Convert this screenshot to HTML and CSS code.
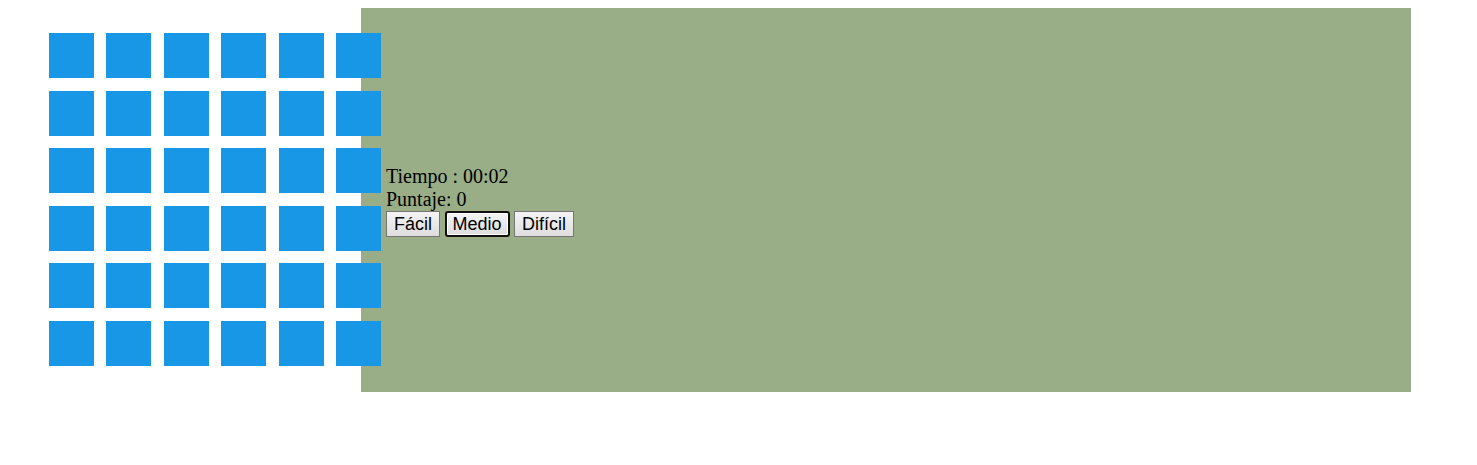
FILE: index.html
```html
<!DOCTYPE html>
<html lang="es">
<head>
<meta charset="utf-8">
<title>Juego</title>
<link rel="stylesheet" href="styles.css">
</head>
<body>
<div class="page">
  <div class="board">
    <div class="grid">
      <div class="cell"></div><div class="cell"></div><div class="cell"></div><div class="cell"></div><div class="cell"></div><div class="cell"></div>
      <div class="cell"></div><div class="cell"></div><div class="cell"></div><div class="cell"></div><div class="cell"></div><div class="cell"></div>
      <div class="cell"></div><div class="cell"></div><div class="cell"></div><div class="cell"></div><div class="cell"></div><div class="cell"></div>
      <div class="cell"></div><div class="cell"></div><div class="cell"></div><div class="cell"></div><div class="cell"></div><div class="cell"></div>
      <div class="cell"></div><div class="cell"></div><div class="cell"></div><div class="cell"></div><div class="cell"></div><div class="cell"></div>
      <div class="cell"></div><div class="cell"></div><div class="cell"></div><div class="cell"></div><div class="cell"></div><div class="cell"></div>
    </div>
  </div>
  <div class="panel">
    <div class="info">
      <div class="line">Tiempo : 00:02</div>
      <div class="line">Puntaje: 0</div>
      <div class="buttons">
        <button class="btn">Fácil</button>
        <button class="btn btn-focus">Medio</button>
        <button class="btn">Difícil</button>
      </div>
    </div>
  </div>
</div>
</body>
</html>
```
FILE: styles.css
```css
html, body {
  margin: 0;
  padding: 0;
  background: #ffffff;
}

body {
  padding: 8px;
  font-family: "Liberation Serif", "Times New Roman", serif;
  color: #000;
}

.page {
  display: flex;
  align-items: flex-start;
}

.board {
  flex: 0 0 312.25px;
  width: 312.25px;
  margin-left: 40.75px;
  margin-top: 25.25px;
  position: relative;
  z-index: 1;
}

.grid {
  width: 332.5px;
  display: grid;
  grid-template-columns: repeat(6, 45px);
  grid-auto-rows: 45px;
  gap: 12.5px;
}

.cell {
  background: #1897e6;
}

.panel {
  flex: 0 0 1050px;
  width: 1050px;
  height: 384px;
  box-sizing: border-box;
  background: #99ae86;
  display: flex;
  align-items: center;
  padding-left: 25px;
}

.info {
  font-size: 20px;
  line-height: 23px;
  padding-top: 1px;
}

.buttons {
  display: flex;
  gap: 4.5px;
}

.btn {
  font-family: "Liberation Sans", Arial, sans-serif;
  font-size: 18px;
  line-height: 20px;
  padding: 2px 7px;
  margin: 0;
  border: 1px solid #767676;
  border-radius: 0;
  background: linear-gradient(#f4f4f4, #dddddd);
  color: #000;
}

.btn-focus {
  border: 2px solid #101010;
  border-radius: 3px;
  padding: 1px 6px;
  box-shadow: inset 0 0 0 1px #ffffff;
}
```
